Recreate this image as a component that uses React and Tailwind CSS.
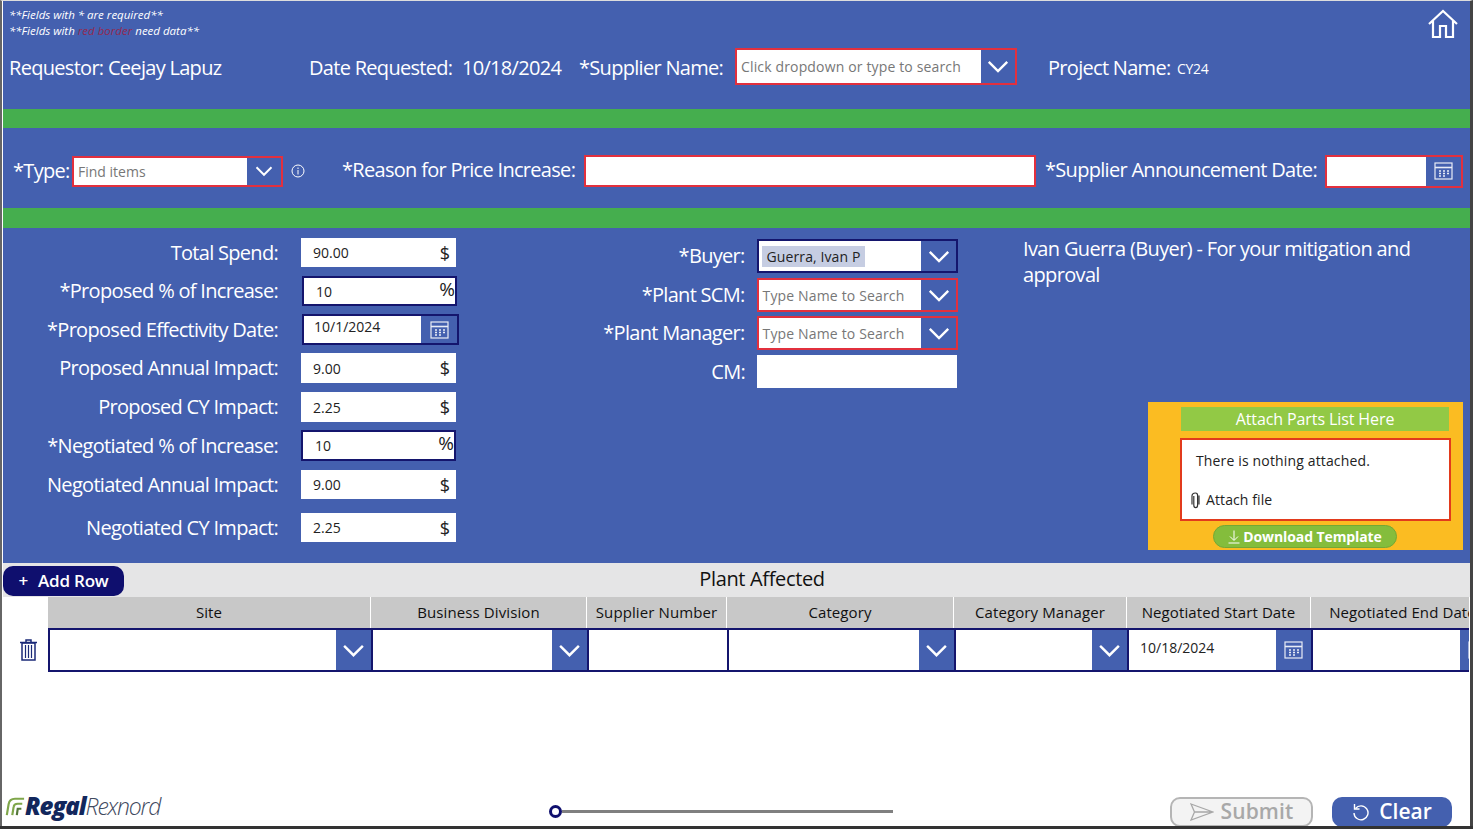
const labelCls = "text-white text-[20px] leading-[26px] tracking-[-0.7px] whitespace-nowrap"

function Chevron({ className = "w-[26px] h-[16px]" }) {
  return (
    <svg viewBox="0 0 26 16" className={className} fill="none" stroke="white" strokeWidth="2.6">
      <path d="M3 3 L13 13 L23 3" />
    </svg>
  )
}

function CalendarIcon({ className = "w-[19px] h-[18px]" }) {
  return (
    <svg viewBox="0 0 19 18" className={className} fill="none" stroke="#e8ecf6" strokeWidth="1.2">
      <rect x="1" y="1" width="17" height="16" />
      <path d="M1 5.5 H18" strokeWidth="1.6" />
      <path d="M5 9 h2 M9 9 h2 M13 9 h2 M5 11.5 h2 M9 11.5 h2 M13 11.5 h2 M5 14 h2 M9 14 h2" strokeWidth="1.3" />
    </svg>
  )
}

function HomeIcon() {
  return (
    <svg viewBox="0 0 32 30" className="w-[32px] h-[30px]" fill="none" stroke="white" strokeWidth="2.2">
      <path d="M2 15 L16 2 L30 15 M6 12 V28 H13 V17 H19 V28 H26 V12" />
    </svg>
  )
}

function TrashIcon() {
  return (
    <svg viewBox="0 0 17 22" className="w-[17px] h-[22px]" fill="none" stroke="#1b2a78" strokeWidth="1.5">
      <path d="M0 3.5 H17 M6 3 V1 H11 V3" />
      <path d="M2 4 H15 V21 H2 Z" />
      <path d="M5.5 6 V19 M8.5 6 V19 M11.5 6 V19" strokeWidth="1.2" />
    </svg>
  )
}

function InfoIcon() {
  return (
    <svg viewBox="0 0 14 14" className="w-[14px] h-[14px]" fill="none" stroke="white" strokeWidth="1">
      <circle cx="7" cy="7" r="6" />
      <path d="M7 6 V10.5 M7 3.5 V5" />
    </svg>
  )
}

function ClipIcon() {
  return (
    <svg viewBox="0 0 9 17" className="h-[17px] w-[9px]" fill="none" stroke="#333" strokeWidth="1.2">
      <path d="M2.8 4 V13 Q2.8 15.6 4.7 15.6 Q6.6 15.6 6.6 13 V3.6 Q6.6 1 4.5 1 Q1 1 1 4 V12.5 M8 3.5 V12.5" />
    </svg>
  )
}

function DownArrow() {
  return (
    <svg viewBox="0 0 12 14" className="h-[14px] w-[12px]" fill="none" stroke="white" strokeWidth="1">
      <path d="M6 0.5 V10 M2 6.5 L6 10.5 L10 6.5 M0.5 13 H11.5" />
    </svg>
  )
}

function SendIcon() {
  return (
    <svg viewBox="0 0 24 18" className="h-[18px] w-[24px]" fill="none" stroke="#a8a8a8" strokeWidth="1.3">
      <path d="M1 1 L23 9 L1 17 L4.5 9 Z M4.5 9 H23" />
    </svg>
  )
}

function UndoIcon() {
  return (
    <svg viewBox="0 0 18 18" className="h-[18px] w-[18px]" fill="none" stroke="white" strokeWidth="1.4">
      <path d="M3.5 5.5 A7 7 0 1 1 2 10" />
      <path d="M2.5 1 V6 H7.5" />
    </svg>
  )
}

function LogoMark() {
  return (
    <svg viewBox="0 0 22 22" className="h-[20px] w-[20px]" fill="none" stroke="#7fa64a" strokeWidth="2.4">
      <path d="M2 21 L4 9 Q5 3 11 3 H21" />
      <path d="M8 21 L9.5 12 Q10 8.5 14 8.5 H19" />
      <path d="M13 21 L14 14 H18" stroke="#55793a" />
    </svg>
  )
}

const leftRows = [
  { label: "Total Spend:", value: "90.00", unit: "$", row: "mt-[10px] h-[29px]" },
  { label: "*Proposed % of Increase:", value: "10", unit: "%", row: "mt-[9px] h-[30px]", box: "ml-[24px] border-2 border-[#14156d]" },
  { label: "*Proposed Effectivity Date:", value: "10/1/2024", date: true, row: "mt-[8px] h-[31px]" },
  { label: "Proposed Annual Impact:", value: "9.00", unit: "$", row: "mt-[8px] h-[30px]" },
  { label: "Proposed CY Impact:", value: "2.25", unit: "$", row: "mt-[9px] h-[30px]" },
  { label: "*Negotiated % of Increase:", value: "10", unit: "%", row: "mt-[8px] h-[31px]", box: "ml-[23px] border-2 border-[#14156d]" },
  { label: "Negotiated Annual Impact:", value: "9.00", unit: "$", row: "mt-[9px] h-[29px]" },
  { label: "Negotiated CY Impact:", value: "2.25", unit: "$", row: "mt-[14px] h-[29px]" },
]

const columns = [
  { title: "Site", width: "w-[323px]", kind: "select" },
  { title: "Business Division", width: "w-[216px]", kind: "select" },
  { title: "Supplier Number", width: "w-[140px]", kind: "text" },
  { title: "Category", width: "w-[227px]", kind: "select" },
  { title: "Category Manager", width: "w-[173px]", kind: "select" },
  { title: "Negotiated Start Date", width: "w-[184px]", kind: "date", value: "10/18/2024" },
  { title: "Negotiated End Date", width: "w-[184px]", kind: "date" },
]

function LeftRow({ item }) {
  return (
    <div className={`flex items-center ${item.row}`}>
      <span className={`${labelCls} w-[275px] text-right`}>{item.label}</span>
      {item.date ? (
        <div className="ml-[24px] flex h-full w-[157px] border-2 border-[#14156d] bg-white">
          <span className="flex-1 pl-[10px] text-[14px] leading-[22px] text-[#222]">{item.value}</span>
          <span className="flex w-[36px] items-center justify-center bg-[#4460af]">
            <CalendarIcon />
          </span>
        </div>
      ) : (
        <div className={`flex h-full w-[155px] items-center justify-between bg-white pl-[12px] pr-[1px] text-[14px] text-[#222] ${item.box || "ml-[23px]"}`}>
          <span>{item.value}</span>
          <span className={item.unit === "$" ? "pr-[5px] text-[18px] leading-none" : "pb-[4px] text-[19px] leading-none tracking-[-1px]"}>{item.unit}</span>
        </div>
      )}
    </div>
  )
}

function PersonField({ label, row, border, chip, placeholder }) {
  return (
    <div className={`flex items-center ${row}`}>
      <span className={`${labelCls} w-[145px] text-right`}>{label}</span>
      <div className={`ml-[12px] flex h-full w-[202px] items-stretch border-2 bg-white ${border}`}>
        <div className="flex flex-1 items-center pl-[3px] text-[14px]">
          {chip ? (
            <span className="bg-[#c6cde2] px-[5px] tracking-[0.1px] text-[#222]">{chip}</span>
          ) : (
            <span className="pl-[1px] tracking-[0.15px] text-[#777]">{placeholder}</span>
          )}
        </div>
        <span className="flex w-[35px] items-center justify-center bg-[#4460af]">
          <Chevron className="h-[15px] w-[24px]" />
        </span>
      </div>
    </div>
  )
}

export default function App() {
  return (
    <div className="flex h-[829px] w-[1473px] flex-col overflow-hidden bg-[#333] font-['Open_Sans',sans-serif]">
      <div className="flex min-h-0 flex-1 flex-col overflow-hidden border-l-[2px] border-r-[3px] border-t border-l-[#666] border-r-[#444] border-t-[#ddd] bg-white pl-[1px]">
        {/* header */}
        <div className="flex h-[108px] flex-col bg-[#4460af]">
          <div className="flex h-[46px] justify-between pl-[6px] pr-[11px] pt-[6px]">
            <div className="text-[11.5px] font-medium italic leading-[16px] text-white">
              <p>**Fields with * are required**</p>
              <p>
                **Fields with <span className="text-[#93294f]">red border</span> need data**
              </p>
            </div>
            <div className="pt-[2px]">
              <HomeIcon />
            </div>
          </div>
          <div className="mt-[1px] flex items-center">
            <span className={`${labelCls} ml-[6px] w-[300px] pt-[3px]`}>Requestor: Ceejay Lapuz</span>
            <span className={`${labelCls} w-[153px] pt-[2px]`}>Date Requested:</span>
            <span className={`${labelCls} w-[117px] pt-[2px]`}>10/18/2024</span>
            <span className={`${labelCls} w-[156px] pt-[3px]`}>*Supplier Name:</span>
            <div className="flex h-[37px] w-[282px] border-2 border-[#e2303e] bg-white">
              <span className="flex-1 pl-[4px] text-[14px] leading-[34px] tracking-[0.15px] text-[#777]">Click dropdown or type to search</span>
              <span className="flex w-[34px] items-center justify-center bg-[#4460af]">
                <Chevron className="h-[15px] w-[24px]" />
              </span>
            </div>
            <span className={`${labelCls} ml-[31px] w-[129px] pt-[2px]`}>Project Name:</span>
            <span className="pt-[3px] text-[14px] tracking-[-0.3px] text-white">CY24</span>
          </div>
        </div>
        <div className="h-[19px] bg-[#45ae4e]" />

        {/* type row */}
        <div className="flex h-[80px] items-center bg-[#4460af]">
          <span className={`${labelCls} ml-[10px] w-[59px] pt-[6px]`}>*Type:</span>
          <div className="mt-[6px] flex h-[31px] w-[211px] border-2 border-[#e2303e] bg-white">
            <span className="flex-1 pl-[4px] text-[14px] leading-[27px] text-[#777]">Find items</span>
            <span className="flex w-[34px] items-center justify-center bg-[#4460af]">
              <Chevron className="h-[12px] w-[20px]" />
            </span>
          </div>
          <span className="ml-[8px] mt-[6px] w-[51px]">
            <InfoIcon />
          </span>
          <span className={`${labelCls} mt-[4px] w-[242px]`}>*Reason for Price Increase:</span>
          <div className="mt-[6px] h-[32px] w-[452px] border-2 border-[#e2303e] bg-white" />
          <span className={`${labelCls} ml-[9px] mt-[4px] w-[280px]`}>*Supplier Announcement Date:</span>
          <div className="mt-[6px] flex h-[33px] w-[138px] border-2 border-[#e2303e] bg-white">
            <span className="flex-1" />
            <span className="flex w-[35px] items-center justify-center bg-[#4460af]">
              <CalendarIcon />
            </span>
          </div>
        </div>
        <div className="h-[20px] bg-[#45ae4e]" />

        {/* main form */}
        <div className="flex h-[335px] bg-[#4460af]">
          <div className="w-[470px]">
            {leftRows.map((item) => (
              <LeftRow key={item.label} item={item} />
            ))}
          </div>
          <div className="ml-[127px] w-[358px] pt-[11px]">
            <PersonField label="*Buyer:" row="h-[34px]" border="border-[#14156d]" chip="Guerra, Ivan P" />
            <PersonField label="*Plant SCM:" row="mt-[5px] h-[34px]" border="border-[#e2303e]" placeholder="Type Name to Search" />
            <PersonField label="*Plant Manager:" row="mt-[4px] h-[34px]" border="border-[#e2303e]" placeholder="Type Name to Search" />
            <div className="mt-[5px] flex h-[33px] items-center">
              <span className={`${labelCls} w-[145px] text-right`}>CM:</span>
              <div className="ml-[12px] h-full w-[200px] bg-white" />
            </div>
          </div>
          <div className="ml-[62px] flex w-[445px] flex-col pt-[8px]">
            <p className="w-[420px] pl-[3px] text-[20px] leading-[26px] tracking-[-0.65px] text-white">
              Ivan Guerra (Buyer) - For your mitigation and approval
            </p>
            <div className="ml-[128px] mt-[114px] flex h-[148px] w-[315px] flex-col items-start bg-[#fbbc22] pl-[32px] pt-[5px]">
              <div className="ml-[1px] h-[24px] w-[268px] bg-[#92c945] text-center text-[16px] leading-[24px] tracking-[-0.1px] text-white">
                Attach Parts List Here
              </div>
              <div className="mt-[7px] flex h-[83px] w-[271px] flex-col border-2 border-[#e23a1c] bg-white text-[14px] text-[#222]">
                <span className="ml-[14px] mt-[11px] leading-[20px] tracking-[0.15px]">There is nothing attached.</span>
                <span className="ml-[9px] mt-[19px] flex items-center gap-[6px] leading-[20px] tracking-[0.1px]">
                  <ClipIcon />
                  Attach file
                </span>
              </div>
              <div className="ml-[33px] mt-[4px] flex h-[23px] w-[184px] items-center justify-center gap-[3px] rounded-full border border-[#74a835] bg-[#84bd3c] text-[14px] font-bold tracking-[-0.1px] text-white">
                <DownArrow />
                Download Template
              </div>
            </div>
          </div>
        </div>

        {/* plant affected */}
        <div className="flex h-[34px] bg-[#e5e5e6]">
          <div className="mt-[3px] flex h-[30px] w-[121px] items-center justify-center gap-[10px] rounded-[10px] bg-[#0f0f6e] text-[17px] font-semibold tracking-[-0.2px] text-white">
            <span>+</span>
            <span>Add Row</span>
          </div>
          <div className="w-[1276px] pt-[2px] text-center text-[20px] font-medium leading-[28px] tracking-[-0.35px] text-[#111]">Plant Affected</div>
        </div>

        <div className="w-[1466px] overflow-hidden">
          <div className="flex pl-[45px]">
            {columns.map((col) => (
              <div key={col.title} className={`${col.width} shrink-0 overflow-hidden`}>
                <div className="mr-[1px] h-[31px] whitespace-nowrap bg-[#c8c8c8] text-center text-[15px] leading-[31px] tracking-[0.1px] text-[#111]">
                  {col.title}
                </div>
              </div>
            ))}
          </div>
          <div className="flex">
            <div className="flex w-[45px] shrink-0 items-center justify-center pl-[5px]">
              <TrashIcon />
            </div>
            {columns.map((col) => (
              <div key={col.title} className={`${col.width} flex h-[44px] shrink-0 overflow-hidden border-y-2 border-l-2 border-[#14156d] bg-white`}>
                <span className="flex-1 pl-[11px] text-[14px] leading-[36px] text-[#222]">{col.value}</span>
                {col.kind === "select" && (
                  <span className="flex w-[35px] items-center justify-center bg-[#4460af]">
                    <Chevron className="h-[15px] w-[25px]" />
                  </span>
                )}
                {col.kind === "date" && (
                  <span className="flex w-[35px] items-center justify-center bg-[#4460af]">
                    <CalendarIcon />
                  </span>
                )}
              </div>
            ))}
          </div>
        </div>

        {/* footer */}
        <div className="mt-auto flex h-[32px] shrink-0 items-start">
          <div className="ml-[2px] mt-[1px] flex w-[544px] items-center">
            <LogoMark />
            <span className="text-[24px] font-extrabold italic leading-[22px] tracking-[-1px] text-[#12275c]">Regal</span>
            <span className="text-[23px] font-light italic leading-[22px] tracking-[-1.2px] text-[#3f4a5e]">Rexnord</span>
          </div>
          <div className="mt-[11px] flex w-[344px] items-center">
            <span className="h-[13px] w-[13px] rounded-full border-[3px] border-[#0f0f6e] bg-white" />
            <span className="h-[3px] flex-1 bg-[#808080]" />
          </div>
          <div className="ml-[277px] mt-[3px] flex h-[30px] w-[143px] shrink-0 items-center justify-center gap-[7px] rounded-[10px] border-2 border-[#b5b5b5] bg-[#f3f3f3] text-[21px] font-semibold tracking-[0.1px] text-[#a8a8a8]">
            <SendIcon />
            Submit
          </div>
          <div className="ml-[19px] mt-[3px] flex h-[30px] w-[120px] shrink-0 items-center justify-center gap-[9px] rounded-[10px] bg-[#4460af] text-[21px] font-semibold text-white">
            <UndoIcon />
            Clear
          </div>
        </div>
      </div>
      <div className="h-[3px] shrink-0 bg-[#333]" />
    </div>
  )
}
